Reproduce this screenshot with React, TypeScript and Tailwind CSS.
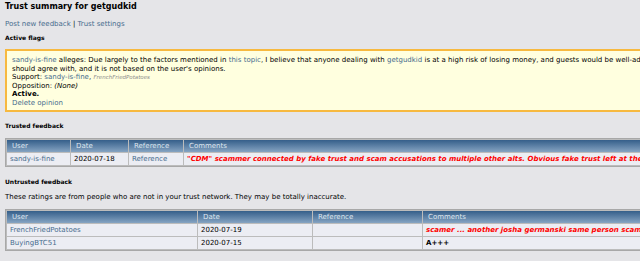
const link = "text-[#476c8e]";

function Heading({ children, className = "" }: { children: React.ReactNode; className?: string }) {
  return <div className={`text-[6px] font-bold leading-[9px] text-black ${className}`}>{children}</div>;
}

type Row = { user: string; date: string; reference?: string; comment: string; negative?: boolean };

function FeedbackTable({ widths, rows, className = "" }: { widths: number[]; rows: Row[]; className?: string }) {
  return (
    <table className={`table-fixed w-[1100px] border border-[#a8a8a8] border-separate border-spacing-px bg-[#bcbcbc] ${className}`}>
      <colgroup>
        {widths.map((w, i) => (
          <col key={i} style={{ width: w }} />
        ))}
        <col />
      </colgroup>
      <thead>
        <tr className="h-[12px]">
          {["User", "Date", "Reference", "Comments"].map((h) => (
            <th
              key={h}
              className="bg-gradient-to-b from-[#355f8a] to-[#86a4c2] text-left font-normal text-[#dfe7ef] pl-[5px] p-0 leading-[12px]"
            >
              {h}
            </th>
          ))}
        </tr>
      </thead>
      <tbody>
        {rows.map((r) => (
          <tr key={r.user} className="h-[12px] bg-[#ecedf3]">
            <td className={`pl-[3px] p-0 leading-[12px] ${link}`}>{r.user}</td>
            <td className="pl-[3px] p-0 leading-[12px] text-black">{r.date}</td>
            <td className={`pl-[3px] p-0 leading-[12px] ${link}`}>{r.reference ?? ""}</td>
            <td
              className={`pl-[3px] p-0 leading-[12px] font-bold whitespace-nowrap overflow-hidden ${
                r.negative ? "italic text-[#ff0000]" : "text-black"
              }`}
            >
              {r.comment}
            </td>
          </tr>
        ))}
      </tbody>
    </table>
  );
}

export default function App() {
  return (
    <div className="w-[640px] h-[261px] overflow-hidden bg-[#e5e5e8] font-['DejaVu_Sans',Verdana,sans-serif] text-[7px] text-black">
      <div className="w-[1100px] pl-[5px]">
        <div className="text-[8px] font-bold leading-[14px]">Trust summary for getgudkid</div>
        <div className="mt-[4px] leading-[12px]">
          <span className={link}>Post new feedback</span>
          <span> | </span>
          <span className={link}>Trust settings</span>
        </div>

        <Heading className="mt-[3px]">Active flags</Heading>

        <div className="mt-[7px] border-2 border-[#f7b93f] bg-[#ffffdf] pl-[5px] pt-[5px] pb-[3px] leading-[8.5px]">
          <div className="whitespace-nowrap">
            <span className={link}>sandy-is-fine</span> alleges: Due largely to the factors mentioned in{" "}
            <span className={link}>this topic</span>, I believe that anyone dealing with{" "}
            <span className={link}>getgudkid</span> is at a high risk of losing money, and guests would be well-advised to be
            careful. This is something that all reasonable people
          </div>
          <div>should agree with, and it is not based on the user's opinions.</div>
          <div>
            Support: <span className={link}>sandy-is-fine</span>,{" "}
            <span className="italic text-[5.5px] text-[#8a8a8a]">FrenchFriedPotatoes</span>
          </div>
          <div>
            Opposition: <span className="italic">(None)</span>
          </div>
          <div className="font-bold">Active.</div>
          <div className={link}>Delete opinion</div>
        </div>

        <Heading className="mt-[9px]">Trusted feedback</Heading>

        <FeedbackTable
          className="mt-[8px]"
          widths={[63, 57, 54]}
          rows={[
            {
              user: "sandy-is-fine",
              date: "2020-07-18",
              reference: "Reference",
              comment:
                "\"CDM\" scammer connected by fake trust and scam accusations to multiple other alts. Obvious fake trust left at the same time by the same accounts.",
              negative: true,
            },
          ]}
        />

        <Heading className="mt-[10px]">Untrusted feedback</Heading>
        <div className="mt-[7px] leading-[9px]">
          These ratings are from people who are not in your trust network. They may be totally inaccurate.
        </div>

        <FeedbackTable
          className="mt-[7px]"
          widths={[190, 114, 109]}
          rows={[
            {
              user: "FrenchFriedPotatoes",
              date: "2020-07-19",
              comment: "scamer ... another josha germanski same person scam many people",
              negative: true,
            },
            { user: "BuyingBTC51", date: "2020-07-15", comment: "A+++" },
          ]}
        />
      </div>
    </div>
  );
}
